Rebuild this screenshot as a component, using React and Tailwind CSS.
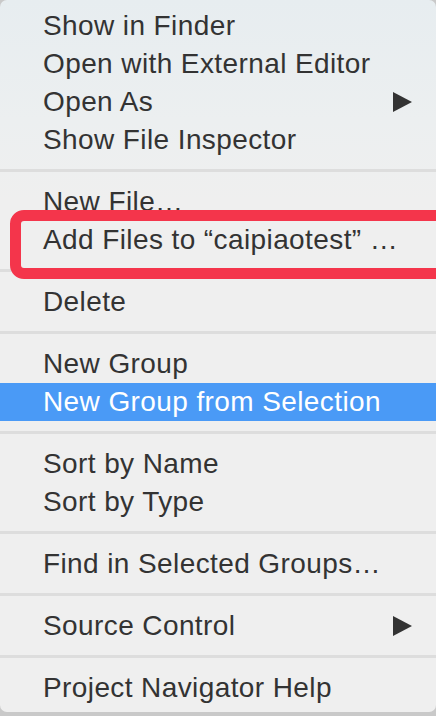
const groups = [
  [
    { label: 'Show in Finder' },
    { label: 'Open with External Editor' },
    { label: 'Open As', submenu: true },
    { label: 'Show File Inspector' },
  ],
  [{ label: 'New File…' }, { label: 'Add Files to “caipiaotest” …' }],
  [{ label: 'Delete' }],
  [{ label: 'New Group' }, { label: 'New Group from Selection', active: true }],
  [{ label: 'Sort by Name' }, { label: 'Sort by Type' }],
  [{ label: 'Find in Selected Groups…' }],
  [{ label: 'Source Control', submenu: true }],
  [{ label: 'Project Navigator Help' }],
]

const MenuItem = ({ label, submenu, active }) => (
  <div
    className={`flex h-[38px] items-center justify-between pl-[43px] pr-[24px] leading-[38px] ${
      active ? 'bg-[#4a9af6] text-white' : 'text-[#333333]'
    }`}
  >
    <span className="whitespace-nowrap">{label}</span>
    {submenu && (
      <svg width="19" height="20" viewBox="0 0 19 20" className="shrink-0">
        <path d="M0 0 L19 10 L0 20 Z" fill="#333333" />
      </svg>
    )}
  </div>
)

const Separator = () => (
  <div className="pt-[10px] pb-[11px]">
    <div className="h-[3px] bg-[#dddddd]" />
  </div>
)

export default function App() {
  return (
    <div className="h-[716px] w-[436px] overflow-hidden bg-[#c9c9c9]">
      <div className="relative h-[712px] overflow-hidden rounded-[7px] bg-[linear-gradient(to_bottom,#e7edf0,#eceff0_120px,#efefef_200px)] pt-[7px] text-[28px] tracking-[0.4px] font-['Liberation_Sans',Arial,sans-serif]">
        {groups.map((items, i) => (
          <div key={i}>
            {i > 0 && <Separator />}
            {items.map((item) => (
              <MenuItem key={item.label} {...item} />
            ))}
          </div>
        ))}

        {/* red annotation box */}
        <div className="pointer-events-none absolute left-[10px] top-[210px] h-[69px] w-[450px] rounded-[14px] border-[11px] border-[#f4354b]" />
      </div>
    </div>
  )
}
